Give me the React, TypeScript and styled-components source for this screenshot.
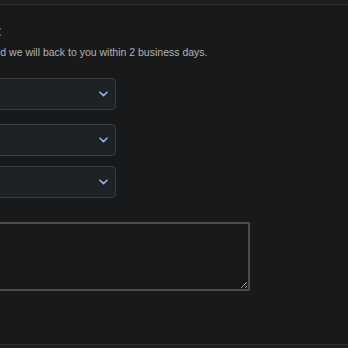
import React from "react";
import styled, { createGlobalStyle } from "styled-components";

const GlobalStyle = createGlobalStyle`
  html, body {
    margin: 0;
    padding: 0;
    background: #18191b;
    overflow: hidden;
  }
  body {
    font-family: "Liberation Sans", Arial, sans-serif;
  }
`;

const Page = styled.div`
  width: 348px;
  height: 348px;
  display: flex;
  flex-direction: column;
  background: #18191b;
  overflow: hidden;
`;

const TopBar = styled.div`
  height: 4px;
  flex-shrink: 0;
  background: #1c1d1f;
  border-bottom: 1px solid #323335;
`;

const Main = styled.main`
  flex: 1;
  display: flex;
  flex-direction: column;
  margin-left: -117px;
  padding-top: 17px;
`;

const Title = styled.h2`
  margin: 0;
  font-size: 15px;
  line-height: 18px;
  font-weight: 700;
  color: #e4e4e4;
  white-space: nowrap;
`;

const Subtitle = styled.p`
  margin: 5px 0 0;
  font-size: 10.5px;
  line-height: 14px;
  color: #b4b4b4;
  white-space: nowrap;
`;

const Form = styled.form`
  display: flex;
  flex-direction: column;
  margin-top: 19px;
`;

const SelectBox = styled.div<{ $gap: number }>`
  position: relative;
  width: 233px;
  height: 32px;
  box-sizing: border-box;
  margin-bottom: ${(p) => p.$gap}px;
  background: #1f2224;
  border: 1px solid #3a3c3e;
  border-radius: 4px;
  display: flex;
  align-items: center;
  justify-content: flex-end;
  padding-right: 7px;
`;

const Chevron = () => (
  <svg width="9" height="6" viewBox="0 0 9 6">
    <path
      d="M1 1.2 L4.5 4.6 L8 1.2"
      fill="none"
      stroke="#8fb3e6"
      strokeWidth="1.6"
      strokeLinecap="round"
      strokeLinejoin="round"
    />
  </svg>
);

const Message = styled.textarea`
  width: 367px;
  height: 69px;
  box-sizing: border-box;
  margin-top: 24px;
  background: #17181a;
  border: 2px solid #4e4a45;
  border-radius: 1px;
  resize: both;
  color: #ddd;
  outline: none;
  color-scheme: dark;
`;

const Footer = styled.footer`
  height: 3px;
  flex-shrink: 0;
  background: #1c1e1e;
  border-top: 1px solid #2c2f2e;
`;

const fields = [14, 10, 0];

export default function App() {
  return (
    <Page>
      <GlobalStyle />
      <TopBar />
      <Main>
        <Title>Contact Support</Title>
        <Subtitle>
          Fill out the form below and we will back to you within 2 business
          days.
        </Subtitle>
        <Form>
          {fields.map((gap, i) => (
            <SelectBox key={i} $gap={gap}>
              <Chevron />
            </SelectBox>
          ))}
          <Message />
        </Form>
      </Main>
      <Footer />
    </Page>
  );
}
